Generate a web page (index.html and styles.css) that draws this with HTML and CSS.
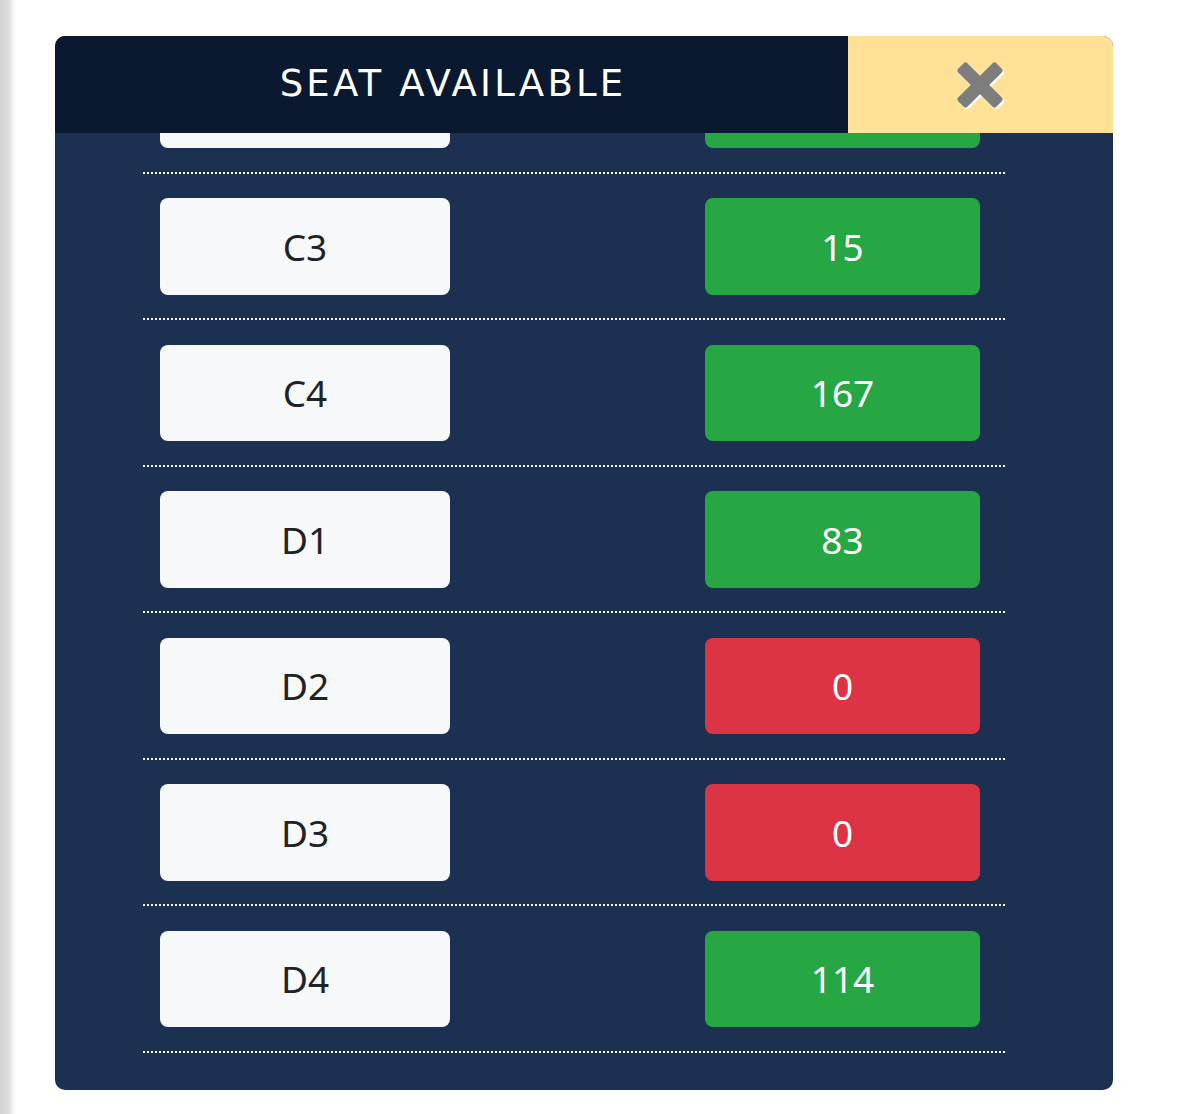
FILE: index.html
```html
<!DOCTYPE html>
<html lang="en">
<head>
<meta charset="utf-8">
<title>Seat Available</title>
<link rel="stylesheet" href="styles.css">
</head>
<body>
<div class="modal">
  <div class="modal-header">
    <div class="modal-title">SEAT AVAILABLE</div>
    <button class="close-btn" type="button" aria-label="Close">
      <svg width="52" height="54" viewBox="0 0 52 54" aria-hidden="true">
        <g transform="translate(1.6 1.8)">
          <rect x="-27" y="-6.5" width="54" height="13" rx="3" fill="#ffffff" transform="translate(25 26) rotate(45)"/>
          <rect x="-27" y="-6.5" width="54" height="13" rx="3" fill="#ffffff" transform="translate(25 26) rotate(-45)"/>
        </g>
        <rect x="-27" y="-6.5" width="54" height="13" rx="3" fill="#7d7d7d" transform="translate(25 26) rotate(45)"/>
        <rect x="-27" y="-6.5" width="54" height="13" rx="3" fill="#7d7d7d" transform="translate(25 26) rotate(-45)"/>
      </svg>
    </button>
  </div>
  <div class="modal-body">
    <ul class="seat-list">
      <li class="seat-row"><div class="zone">C2</div><div class="count ok">42</div></li>
      <li class="seat-row"><div class="zone">C3</div><div class="count ok">15</div></li>
      <li class="seat-row"><div class="zone">C4</div><div class="count ok">167</div></li>
      <li class="seat-row"><div class="zone">D1</div><div class="count ok">83</div></li>
      <li class="seat-row"><div class="zone">D2</div><div class="count full">0</div></li>
      <li class="seat-row"><div class="zone">D3</div><div class="count full">0</div></li>
      <li class="seat-row"><div class="zone">D4</div><div class="count ok">114</div></li>
    </ul>
  </div>
</div>
</body>
</html>
```

FILE: styles.css
```css
html, body {
  margin: 0;
  padding: 0;
}

body {
  min-height: 1114px;
  box-sizing: border-box;
  padding: 36px 0 0 55px;
  background: linear-gradient(to right, #d2d2d2 0px, #dadada 8px, #f4f4f4 13px, #ffffff 16px);
  font-family: "Noto Sans", "DejaVu Sans", sans-serif;
}

.modal {
  width: 1058px;
  border-radius: 10px;
  overflow: hidden;
  background: #1c3051;
}

.modal-header {
  display: flex;
  height: 97px;
  position: relative;
  z-index: 1;
}

.modal-title {
  flex: 1;
  background: #0a1830;
  color: #ffffff;
  font-family: "DejaVu Sans", "Noto Sans", sans-serif;
  font-size: 37px;
  font-weight: 400;
  letter-spacing: 3.2px;
  display: flex;
  align-items: center;
  justify-content: center;
  padding: 0 0 3px 3px;
}

.close-btn {
  width: 265px;
  border: 0;
  margin: 0;
  padding: 0;
  background: #ffe297;
  display: flex;
  align-items: center;
  justify-content: center;
  cursor: pointer;
}

.close-btn svg {
  display: block;
  margin-top: 3px;
}

.modal-body {
  overflow: hidden;
  padding-bottom: 37px;
}

.seat-list {
  list-style: none;
  margin: -106px 108px 0 88px;
  padding: 0;
}

.seat-row {
  display: flex;
  justify-content: space-between;
  align-items: center;
  padding: 24.5px 25px 25.5px 17px;
  background-image: repeating-linear-gradient(to right, #ffffff 0 2px, transparent 2px 4px);
  background-size: 100% 2px;
  background-position: left bottom;
  background-repeat: no-repeat;
}

.zone,
.count {
  height: 96.5px;
  border-radius: 8px;
  display: flex;
  align-items: center;
  justify-content: center;
  font-size: 37px;
  font-weight: 400;
  box-sizing: border-box;
}

.zone {
  width: 290px;
  background: #f7f8fa;
  color: #1f2226;
}

.count {
  width: 275px;
  color: #ffffff;
}

.count.ok {
  background: #27a744;
}

.count.full {
  background: #dc3444;
}
```
